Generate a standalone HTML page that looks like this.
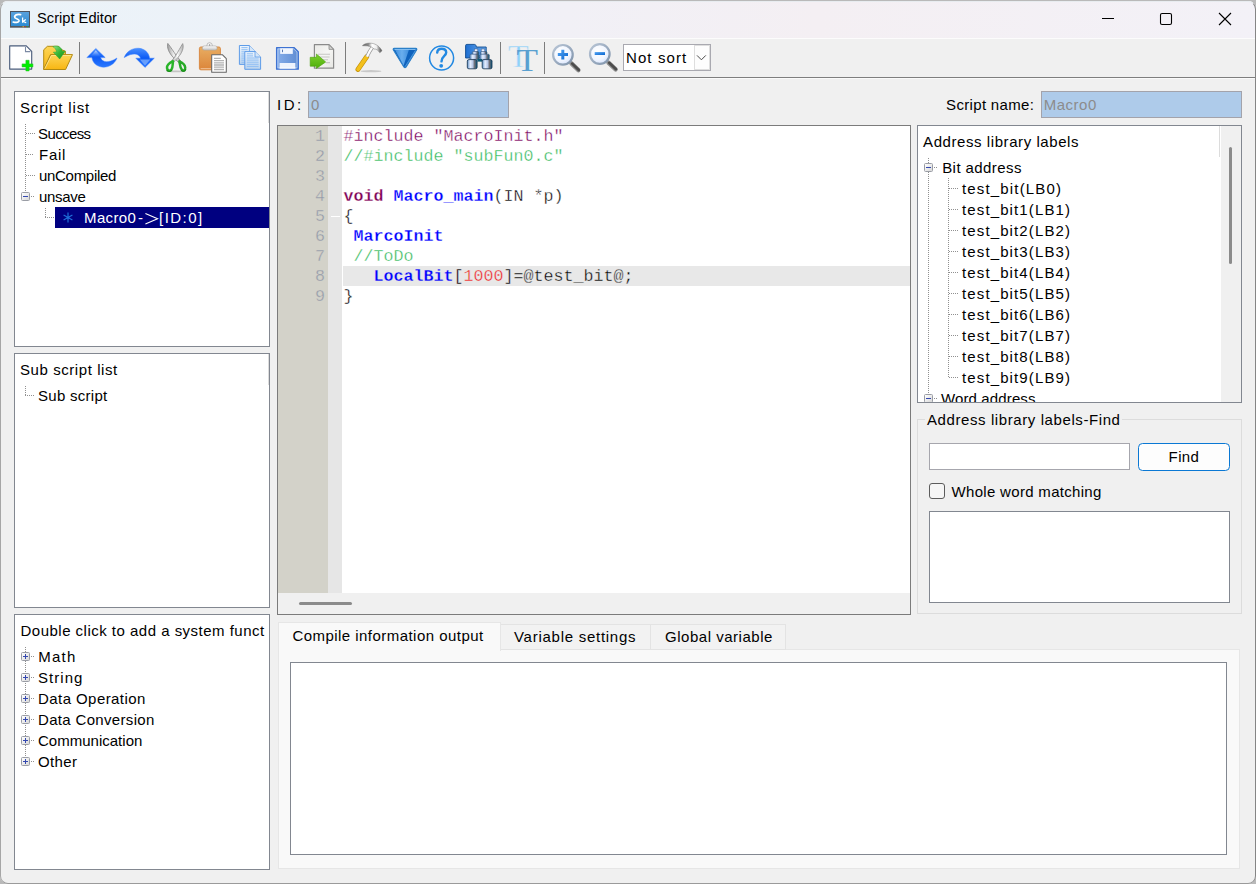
<!DOCTYPE html>
<html>
<head>
<meta charset="utf-8">
<title>Script Editor</title>
<style>
*{box-sizing:border-box;margin:0;padding:0}
html,body{width:1256px;height:884px;overflow:hidden;background:#b9b9b9;font-family:"Liberation Sans",sans-serif;}
#win{position:absolute;left:0;top:1px;width:1256px;height:883px;background:#f0f0f0;border-radius:8px;overflow:hidden;}
#winb{position:absolute;left:0;top:1px;width:1256px;height:883px;border-radius:8px;border:1px solid #a6a6a6;border-right-color:#858585;border-bottom-color:#9a9a9a;border-top-color:#e8ecf0;pointer-events:none}
.abs{position:absolute}
#title{position:absolute;left:0;top:0;width:1256px;height:38px;background:linear-gradient(90deg,#ebf3f8 0%,#edf1f9 28%,#f1f0f6 45%,#f4eff3 65%,#f3f1f7 100%);}
#title .txt{position:absolute;left:37px;top:9px;font-size:14.7px;line-height:18px;color:#000;white-space:nowrap}
#tbline{position:absolute;left:1px;top:77px;width:1254px;height:1px;background:#7e7e7e;}
#tbline2{position:absolute;left:1px;top:78px;width:1254px;height:1px;background:#fafafa;}
.panel{position:absolute;background:#fff;border:1px solid #828790;}
.t{position:absolute;font-size:15px;line-height:18px;color:#000;white-space:nowrap}
.inp{position:absolute;background:#aecbea;border:1px solid #a3a3ab;}
.code{position:absolute;left:343.5px;font-family:"Liberation Mono",monospace;font-size:16.67px;line-height:20px;height:20px;white-space:pre;color:#000}
.ln{position:absolute;left:278px;width:47px;text-align:right;font-family:"Liberation Mono",monospace;font-size:16.67px;line-height:20px;height:20px;color:#9299a8}
.code{-webkit-text-stroke:0.36px #fff}
.code.hl{-webkit-text-stroke-color:#e8e8e8}
.ln{-webkit-text-stroke:0.36px #d4d2c9}
.kw,.fn{-webkit-text-stroke-width:0.28px}
.kw{color:#7f0055;font-weight:bold}
.fn{color:#0000ff;font-weight:bold}
.pp{color:#78005a}
.cm{color:#30b858}
.num{color:#f02020}
.dh{position:absolute;height:1px;background-image:linear-gradient(90deg,#909090 50%,rgba(255,255,255,0) 50%);background-size:2px 1px}
.dv{position:absolute;width:1px;background-image:linear-gradient(180deg,#909090 50%,rgba(255,255,255,0) 50%);background-size:1px 2px}
.bx{position:absolute;width:9px;height:9px;border:1px solid #9a9da5;background:linear-gradient(135deg,#fff,#d8d8d8);border-radius:1.5px}
.bx:before{content:"";position:absolute;left:1px;top:3px;width:5px;height:1px;background:#3448b0}
.bx.plus:after{content:"";position:absolute;left:3px;top:1px;width:1px;height:5px;background:#3448b0}
.sep{position:absolute;top:42px;width:1px;height:32px;background:#7c7c7c}
#in{position:absolute;left:0;top:-1px;width:1256px;height:884px}
</style>
</head>
<body>
<div id="win"><div id="in">
<div id="title"><div class="txt">Script Editor</div></div>
<!-- app icon -->
<svg class="abs" style="left:9px;top:10px" width="22" height="18" viewBox="9 10 22 18">
<defs><linearGradient id="gSk" x1="0" y1="0" x2="0" y2="1"><stop offset="0" stop-color="#5aa2de"/><stop offset="1" stop-color="#2a8ad2"/></linearGradient></defs>
<rect x="10.5" y="11.5" width="19" height="15.5" fill="url(#gSk)" stroke="#4f5560" stroke-width="1"/>
<rect x="10" y="26" width="20" height="1.4" fill="#55595f"/>
<rect x="22.6" y="26.2" width="1.2" height="1" fill="#e8c020"/><rect x="24.6" y="26.2" width="1.2" height="1" fill="#d83030"/><rect x="26.6" y="26.2" width="1.2" height="1" fill="#30b030"/>
<path d="M20.6 14.6C17.5 14.2 15 15 14.6 16.8C14.2 19 19.4 18.6 19 21C18.6 22.6 15.6 22.8 13.2 22" fill="none" stroke="#fff" stroke-width="1.7" stroke-linecap="round"/>
<path d="M22.6 17.4V22.8M25.8 19.4L23 21.4L26.2 22.8" fill="none" stroke="#fff" stroke-width="1.2"/>
</svg>
<!-- caption buttons -->
<svg class="abs" style="left:1090px;top:8px" width="150" height="24" viewBox="1090 8 150 24">
<path d="M1102 18.5H1114" stroke="#000" stroke-width="1"/>
<rect x="1160.5" y="13.5" width="11" height="11" rx="1.6" fill="none" stroke="#000" stroke-width="1.1"/>
<path d="M1219 13L1231 25M1231 13L1219 25" stroke="#000" stroke-width="1.1"/>
</svg>
<div class="abs" style="left:1px;top:38px;width:1254px;height:1px;background:#fcfcfc"></div>
<div id="tbline"></div><div id="tbline2"></div>
<div class="sep" style="left:79px"></div><div class="sep" style="left:345px"></div><div class="sep" style="left:500px"></div><div class="sep" style="left:544px"></div>
<svg class="abs" style="left:0;top:39px" width="730" height="38" viewBox="0 39 730 38">
<defs>
<linearGradient id="gFold" x1="0" y1="0" x2="0" y2="1"><stop offset="0" stop-color="#fdd556"/><stop offset="1" stop-color="#f8b612"/></linearGradient>
<linearGradient id="gGreen" x1="0" y1="0" x2="1" y2="1"><stop offset="0" stop-color="#8fe58f"/><stop offset="0.5" stop-color="#35b535"/><stop offset="1" stop-color="#1a8f1a"/></linearGradient>
<linearGradient id="gBlue" x1="0" y1="0" x2="0" y2="1"><stop offset="0" stop-color="#4a90ff"/><stop offset="0.5" stop-color="#0e5cf5"/><stop offset="1" stop-color="#2a78ff"/></linearGradient>
<linearGradient id="gClip" x1="0" y1="0" x2="0" y2="1"><stop offset="0" stop-color="#e8ad62"/><stop offset="1" stop-color="#dc853a"/></linearGradient>
<linearGradient id="gSilver" x1="0" y1="0" x2="0" y2="1"><stop offset="0" stop-color="#ffffff"/><stop offset="1" stop-color="#c4c4c4"/></linearGradient>
<linearGradient id="gCopy" x1="0" y1="0" x2="0" y2="1"><stop offset="0" stop-color="#eef5fd"/><stop offset="1" stop-color="#b9d3ee"/></linearGradient>
<linearGradient id="gFloppy" x1="0" y1="0" x2="1" y2="0"><stop offset="0" stop-color="#86aeea"/><stop offset="1" stop-color="#5f8cd2"/></linearGradient>
<linearGradient id="gPage" x1="0" y1="0" x2="1" y2="1"><stop offset="0" stop-color="#e9e9e6"/><stop offset="0.5" stop-color="#f6f6f4"/><stop offset="1" stop-color="#e6e6e3"/></linearGradient>
<linearGradient id="gArrow" x1="0" y1="0" x2="0" y2="1"><stop offset="0" stop-color="#7bd02c"/><stop offset="1" stop-color="#4fae0c"/></linearGradient>
<linearGradient id="gTriL" x1="0" y1="0" x2="1" y2="0"><stop offset="0" stop-color="#3f8fde"/><stop offset="0.5" stop-color="#69aeee"/><stop offset="1" stop-color="#3f8fde"/></linearGradient>
<linearGradient id="gMetal" x1="0" y1="0" x2="1" y2="0"><stop offset="0" stop-color="#5d8fc4"/><stop offset="0.3" stop-color="#e6eeff"/><stop offset="0.55" stop-color="#b8c8e8"/><stop offset="0.75" stop-color="#6a6a72"/><stop offset="1" stop-color="#0d5a80"/></linearGradient>
<linearGradient id="gBFold" x1="0" y1="0" x2="1" y2="0"><stop offset="0" stop-color="#1e6fd2"/><stop offset="1" stop-color="#69a8ea"/></linearGradient>
<radialGradient id="gLens" cx="0.4" cy="0.35" r="0.75"><stop offset="0" stop-color="#ffffff"/><stop offset="0.6" stop-color="#f0f5ff"/><stop offset="1" stop-color="#cddcfa"/></radialGradient>
<linearGradient id="gRing" x1="0" y1="0" x2="1" y2="1"><stop offset="0" stop-color="#b9c6d6"/><stop offset="1" stop-color="#7f93ab"/></linearGradient>
<linearGradient id="gPlus" x1="0" y1="0" x2="1" y2="1"><stop offset="0" stop-color="#52a4f4"/><stop offset="1" stop-color="#0a66d0"/></linearGradient>
<linearGradient id="gBlade" x1="0" y1="0" x2="1" y2="0"><stop offset="0" stop-color="#9c9c9c"/><stop offset="0.5" stop-color="#f2f2f2"/><stop offset="1" stop-color="#a6a6a6"/></linearGradient>
<linearGradient id="gBlade2" x1="0" y1="0" x2="1" y2="0"><stop offset="0" stop-color="#b4b4b4"/><stop offset="0.5" stop-color="#fafafa"/><stop offset="1" stop-color="#b0b0b0"/></linearGradient>
<linearGradient id="gHead" gradientUnits="userSpaceOnUse" x1="362" y1="0" x2="382" y2="0"><stop offset="0" stop-color="#565656"/><stop offset="0.32" stop-color="#8c8c8c"/><stop offset="0.5" stop-color="#ffffff"/><stop offset="0.72" stop-color="#efefef"/><stop offset="0.86" stop-color="#8e8e8e"/><stop offset="1" stop-color="#484848"/></linearGradient>
<linearGradient id="gHi" x1="0" y1="0" x2="0" y2="1"><stop offset="0" stop-color="#d8e8ff" stop-opacity="0.9"/><stop offset="1" stop-color="#78aaff" stop-opacity="0"/></linearGradient>
</defs>

<!-- new file -->
<path d="M9.7 45.9H26.3L31.7 51.3V69.1H9.7Z" fill="#fff" stroke="#4b5d7c" stroke-width="1.15" stroke-linejoin="round"/>
<path d="M25.5 47V51.6H30.4" fill="none" stroke="#7c8aa4" stroke-width="1.1"/>
<path d="M25.9 60.3H29.1V63.9H32.9V66.9H29.1V70.9H25.9V66.9H22.1V63.9H25.9Z" fill="#00ee00" stroke="#22c822" stroke-width="0.6"/>

<!-- open folder -->
<path d="M43.7 69.3V49.8L47.4 46.3H58.5L61 49.5 65.4 51.2V54.5H50.6Z" fill="url(#gFold)" stroke="#b38a12" stroke-width="1"/>
<path d="M43.7 69.5L50.8 54.6H72.5L65.6 69.5Z" fill="url(#gFold)" stroke="#b38a12" stroke-width="1" stroke-linejoin="round"/>
<path d="M44.8 68.6L51.4 55.5H71.2" fill="none" stroke="#fde592" stroke-width="0.9"/>
<path d="M52.8 46.6C57.5 45 61.8 47.2 62.3 51.3L65.2 51.2 59.7 59 53.3 52.2 56.6 51.9C56.2 49.6 55 47.8 52.8 46.6Z" fill="url(#gGreen)" stroke="#2aa02a" stroke-width="0.5"/>

<!-- undo -->
<path d="M95.8 48.4L105.2 57.6H100.6C102 62.5 108.5 63.6 117 58C114.5 65 106.5 68.6 99.8 66.6C94.8 65 92.3 61.2 92 57.6H86.9Z" fill="url(#gBlue)" stroke="#3a80ff" stroke-width="0.5" stroke-linejoin="round"/>
<path d="M95.8 50.2L90.6 56.4H101Z" fill="url(#gHi)"/>
<!-- redo -->
<path d="M145 67.4L135.8 58.2H140.5C139.3 53.6 133 52 124.2 57.6C126.5 50.6 134.3 47 141 48.6C146 50 149.2 53.8 149.6 58.2H154.3Z" fill="url(#gBlue)" stroke="#3a80ff" stroke-width="0.5" stroke-linejoin="round"/>
<path d="M145 65.6L150.4 59.4H139.8Z" fill="#a8ccff" opacity="0.55"/>

<!-- scissors -->
<ellipse cx="176" cy="71.4" rx="10" ry="0.9" fill="#c4c4c4"/>
<path d="M167.8 43.4C166.6 47.6 169 53 173.4 57.6L178.6 62.4L180.6 60.8L176.6 56C173.4 51.4 170.4 46.6 167.8 43.4Z" fill="url(#gBlade)" stroke="#868686" stroke-width="0.8" stroke-linejoin="round"/>
<path d="M182.7 43.6C184.2 47.8 182 53 178 57.4L173.6 62.2L171.8 60.8L175.4 56C178.2 51.6 180.6 47 182.7 43.6Z" fill="url(#gBlade2)" stroke="#8e8e8e" stroke-width="0.8" stroke-linejoin="round"/>
<path d="M173 61.2C172.6 64 173 67.4 171.4 69.6C170 71.4 167.4 70.8 167 68C166.8 65 169.2 63 173 61.2Z" fill="#f4eef4" stroke="#2ab52a" stroke-width="2.5" stroke-linejoin="round"/>
<path d="M179.4 61.4C180 64 179.8 67.4 181.8 69.6C183.4 71.4 185.4 70.4 185.2 67.6C185 64.8 183 63 179.4 61.4Z" fill="#f4eef4" stroke="#27aa27" stroke-width="2.5" stroke-linejoin="round"/>
<path d="M166.6 69.8C167.8 72 170.8 72 172 69.8" fill="none" stroke="#178a17" stroke-width="1.1"/>
<path d="M181.2 70C182.4 72 185.2 71.6 185.8 69.2" fill="none" stroke="#178a17" stroke-width="1.1"/>

<!-- paste -->
<rect x="199.4" y="47" width="21" height="22.8" rx="1.5" fill="url(#gClip)" stroke="#d98a44" stroke-width="1"/>
<path d="M200.6 68.6H211" stroke="#f2c49a" stroke-width="0.9"/>
<circle cx="209.6" cy="45.4" r="2.7" fill="#f6f6f6" stroke="#a6a6a6" stroke-width="0.7"/>
<rect x="202.4" y="45.9" width="14.6" height="4.2" rx="1.8" fill="url(#gSilver)" stroke="#a9a9a9" stroke-width="0.6"/>
<circle cx="209.6" cy="45" r="0.7" fill="#8a8a8a"/>
<path d="M211.7 54.7H222.3L226.3 58.7V72.2H211.7Z" fill="#fff" stroke="#666" stroke-width="1.05" stroke-linejoin="round"/>
<path d="M214 58.3H220.8M214 60.6H224M214 62.8H224M214 65H224M214 67.2H224M214 69.5H224" stroke="#b3b3b3" stroke-width="1.3"/>

<!-- copy -->
<path d="M239.4 45.5H249.4L255.6 51.6V64.4H239.4Z" fill="url(#gCopy)" stroke="#5e9ce8" stroke-width="1"/>
<path d="M249.4 45.5V51.6H255.6" fill="#d5e6f8" stroke="#5e9ce8" stroke-width="0.8"/>
<path d="M241.4 47.6H247.6M241.4 49.7H247.6M241.4 51.8H245M241.4 53.9H245M241.4 56H245M241.4 58.1H245M241.4 60.2H245M241.4 62.3H245" stroke="#90bff4" stroke-width="1"/>
<path d="M244.8 51.6H255L260.6 57V69.3H244.8Z" fill="url(#gCopy)" stroke="#5e9ce8" stroke-width="1"/>
<path d="M255 51.6V57H260.6" fill="#d5e6f8" stroke="#5e9ce8" stroke-width="0.8"/>
<path d="M246.8 53.8H253M246.8 55.9H253M246.8 58H258.6M246.8 60.1H258.6M246.8 62.2H258.6M246.8 64.3H258.6M246.8 66.4H258.6" stroke="#90bff4" stroke-width="1"/>

<!-- save -->
<path d="M276.6 47.6H294.2L298.3 51.6V69.2H276.6Z" fill="url(#gFloppy)" stroke="#3f73d2" stroke-width="1.3" stroke-linejoin="round"/>
<path d="M277.9 48.9H293.7L297 52.1V67.9H277.9Z" fill="none" stroke="#c4daf8" stroke-width="0.7"/>
<rect x="280.2" y="48.3" width="12.6" height="5.6" fill="#f1f6fe"/>
<rect x="282" y="49.6" width="0.9" height="2.6" fill="#4a6fae"/>
<rect x="279.6" y="63" width="15.8" height="5.4" fill="#eef3fd"/>
<rect x="279.6" y="67.6" width="15.8" height="0.9" fill="#fff"/>

<!-- export -->
<path d="M314.4 44.7H329L333.6 49.4V68.2H314.4Z" fill="url(#gPage)" stroke="#8a8a8a" stroke-width="1.2" stroke-linejoin="round"/>
<path d="M329 44.7V49.4H333.6Z" fill="#d0d0ce" stroke="#8a8a8a" stroke-width="0.8"/>
<path d="M318 54.3H330M318 57H329.6M322 59.8H328M326 62.6H330" stroke="#c6c6c4" stroke-width="1.1"/>
<path d="M310.2 57.3H316.4V54L325.7 62 316.4 68.4V66.2H310.2Z" fill="url(#gArrow)" stroke="#4aa00e" stroke-width="0.6" stroke-linejoin="round"/>

<!-- hammer -->
<ellipse cx="371" cy="71.2" rx="10.5" ry="1.1" fill="#c9c9c9"/>
<path d="M358 69.4L366.6 56.8" stroke="#c4920a" stroke-width="5" stroke-linecap="round"/>
<path d="M358.1 69.2L366.5 57" stroke="#f3c01c" stroke-width="3.7" stroke-linecap="round"/>
<path d="M367 56.6C368.6 53 370.6 49.6 372.8 46.6" fill="none" stroke="#9a9a9a" stroke-width="3.6"/>
<path d="M367 56.6C368.6 53 370.6 49.6 372.8 46.4" fill="none" stroke="#fdfdfd" stroke-width="2.2"/>
<path d="M362.4 45.7C364.4 43.5 368.4 42.7 371.8 43.3C376 43.8 380 46.8 382 50.8L379.8 52.8C378.2 50.2 376.2 48.8 374 49C372.6 47.4 370.2 46.2 367.4 45.9C365.6 45.7 363.8 45.9 362.4 45.7Z" fill="url(#gHead)" stroke="#7a7a7a" stroke-width="0.5" stroke-linejoin="round"/>

<!-- triangle -->
<path d="M394.2 48.4H415.8Q417.4 48.6 416.6 50L406 67.2Q405 68.4 404 67.2L393.4 50Q392.6 48.6 394.2 48.4Z" fill="#0f62bc" stroke="#2a7fc8" stroke-width="1.1"/>
<path d="M394.8 49.6H409L403.6 65.6Z" fill="url(#gTriL)"/>
<path d="M394.4 49.5H415.6" stroke="#8cc4f4" stroke-width="0.9"/>
<path d="M415.4 50.4L405 66.8" stroke="#58a2e6" stroke-width="0.8"/>

<!-- help -->
<circle cx="441.6" cy="58" r="12" fill="none" stroke="#2389e2" stroke-width="1.5"/>
<path d="M437.2 52.6C437.4 50 439.2 48.8 441.6 48.8C444.4 48.8 446.2 50.4 446.2 52.6C446.2 56 441.6 56 441.5 61.4" fill="none" stroke="#2389e2" stroke-width="2.4" stroke-linecap="round"/>
<circle cx="441.2" cy="65.8" r="1.9" fill="#2389e2"/>

<!-- binoculars -->
<path d="M465.6 45.6Q465.6 44.4 466.8 44.4H474.4Q475.6 44.4 476 45.6L476.4 47H486.2V58H465.6Z" fill="url(#gBFold)" stroke="#0d4a8e" stroke-width="0.9"/>
<rect x="474.4" y="49" width="3.4" height="2.8" fill="#e8f0ff" stroke="#3a5a86" stroke-width="0.5"/>
<rect x="481.2" y="49" width="3.6" height="2.8" fill="#e8f0ff" stroke="#3a5a86" stroke-width="0.5"/>
<rect x="472.2" y="51.6" width="6.6" height="2.8" rx="1" fill="url(#gMetal)" stroke="#2a4a70" stroke-width="0.5"/>
<rect x="480.4" y="51.6" width="6.6" height="2.8" rx="1" fill="url(#gMetal)" stroke="#2a4a70" stroke-width="0.5"/>
<rect x="469.9" y="54.2" width="9.3" height="5.2" rx="1" fill="url(#gMetal)" stroke="#2a4a70" stroke-width="0.5"/>
<rect x="480" y="54.2" width="9.3" height="5.2" rx="1" fill="url(#gMetal)" stroke="#2a4a70" stroke-width="0.5"/>
<rect x="477.4" y="59" width="4.6" height="2.6" fill="#0d5a78"/>
<rect x="467.3" y="59.6" width="9.8" height="9.2" rx="1.6" fill="url(#gMetal)" stroke="#12304e" stroke-width="0.8"/>
<rect x="482.2" y="59.6" width="9.8" height="9.2" rx="1.6" fill="url(#gMetal)" stroke="#12304e" stroke-width="0.8"/>

<!-- TT -->
<text x="0" y="0" transform="translate(507.9 66.6) scale(1.05 1)" font-family="Liberation Serif, serif" font-size="32.6" fill="#8fd1fa" stroke="#f0f0f0" stroke-width="0.5">T</text>
<text x="0" y="0" transform="translate(516.6 71) scale(1.08 1)" font-family="Liberation Serif, serif" font-size="32.6" fill="#5aa0d0">T</text>

<!-- zoom in -->
<path d="M571.4 63.4L578.4 70.2" stroke="#8e8e8e" stroke-width="4.4" stroke-linecap="round"/>
<path d="M572.2 63.6L578.8 70" stroke="#4c4c4c" stroke-width="2.6" stroke-linecap="round"/>
<circle cx="562.9" cy="54.8" r="9.8" fill="url(#gLens)" stroke="url(#gRing)" stroke-width="2.2"/>
<path d="M561.3 49.8H564.3V53.1H568V56.1H564.3V59.6H561.3V56.1H557.8V53.1H561.3Z" fill="url(#gPlus)"/>
<!-- zoom out -->
<path d="M608.4 62.6L615.6 69.4" stroke="#8e8e8e" stroke-width="4.4" stroke-linecap="round"/>
<path d="M609.2 62.8L616 69.2" stroke="#4c4c4c" stroke-width="2.6" stroke-linecap="round"/>
<circle cx="599.8" cy="54" r="9.8" fill="url(#gLens)" stroke="url(#gRing)" stroke-width="2.2"/>
<rect x="594.7" y="52.1" width="10.3" height="2.9" fill="url(#gPlus)"/>
</svg>

<!-- combo -->
<div class="abs" style="left:623px;top:44px;width:88px;height:27px;background:#fff;border:1px solid #a9a9b0"></div>
<div class="abs" style="left:694px;top:45px;width:16px;height:25px;background:#fdfdfd;border:1px solid #dedede"></div>
<svg class="abs" style="left:695px;top:53px" width="13" height="9" viewBox="695 53 13 9"><path d="M697 55.4L701.4 59.8L705.8 55.4" fill="none" stroke="#4a4a4a" stroke-width="1"/></svg>

<!-- left panels -->
<div class="panel" style="left:14px;top:91px;width:256px;height:256px"></div>
<div class="panel" style="left:14px;top:353px;width:256px;height:255px"></div>
<div class="panel" style="left:14px;top:614px;width:256px;height:256px"></div>
<div class="abs" style="left:268px;top:92px;width:1px;height:31px;background:#dcdcdc"></div>
<div class="abs" style="left:268px;top:354px;width:1px;height:31px;background:#dcdcdc"></div>

<!-- p1 tree -->
<div class="dv" style="left:25px;top:124px;height:68px"></div>
<div class="dh" style="left:26px;top:133px;width:10px"></div>
<div class="dh" style="left:26px;top:154px;width:8px"></div>
<div class="dh" style="left:26px;top:175px;width:10px"></div>
<div class="bx" style="left:21px;top:192px"></div>
<div class="dh" style="left:31px;top:196px;width:4px"></div>
<div class="dv" style="left:45px;top:208px;height:10px"></div>
<div class="dh" style="left:45px;top:217px;width:10px"></div>
<div class="abs" style="left:55px;top:207px;width:214px;height:21px;background:#000080"></div>
<svg class="abs" style="left:62px;top:211px" width="12" height="13" viewBox="62 211 12 13"><path d="M68 212.4V222.6M63.6 215L72.4 220M72.4 215L63.6 220" stroke="#1f6fd8" stroke-width="1.2" fill="none"/></svg>

<svg class="abs" style="left:144px;top:211px" width="16" height="16" viewBox="144 211 16 16"><path d="M145.4 213.4L157.6 218.7L145.4 224" fill="none" stroke="#fff" stroke-width="1.1"/></svg>
<!-- p2 tree -->
<div class="dv" style="left:25px;top:386px;height:10px"></div>
<div class="dh" style="left:25px;top:395px;width:10px"></div>

<!-- p3 tree -->
<div class="dv" style="left:25px;top:647px;height:112px"></div>
<div class="bx plus" style="left:21px;top:652px"></div><div class="dh" style="left:31px;top:656px;width:4px"></div>
<div class="bx plus" style="left:21px;top:673px"></div><div class="dh" style="left:31px;top:677px;width:4px"></div>
<div class="bx plus" style="left:21px;top:694px"></div><div class="dh" style="left:31px;top:698px;width:4px"></div>
<div class="bx plus" style="left:21px;top:715px"></div><div class="dh" style="left:31px;top:719px;width:4px"></div>
<div class="bx plus" style="left:21px;top:736px"></div><div class="dh" style="left:31px;top:740px;width:4px"></div>
<div class="bx plus" style="left:21px;top:757px"></div><div class="dh" style="left:31px;top:761px;width:4px"></div>

<!-- ID / name -->
<div class="inp" style="left:308px;top:91px;width:201px;height:27px"></div>
<div class="inp" style="left:1041px;top:91px;width:201px;height:27px"></div>

<!-- editor -->
<div class="panel" style="left:277px;top:125px;width:634px;height:490px;border-color:#7b7b7b"></div>
<div class="abs" style="left:278px;top:126px;width:50px;height:467px;background:#d3d2c9"></div>
<div class="abs" style="left:328px;top:126px;width:14px;height:467px;background:#e6e6e6"></div>
<div class="abs" style="left:343px;top:266px;width:567px;height:20px;background:#e8e8e8"></div>
<div class="abs" style="left:278px;top:593px;width:632px;height:21px;background:#f0f0f0"></div>
<div class="abs" style="left:299px;top:602px;width:53px;height:3px;background:#8b8b8b;border-radius:1.5px"></div>
<div class="abs" style="left:331px;top:216px;width:9px;height:1px;background:#fff"></div>
<div class="ln" style="top:127px">1</div><div class="ln" style="top:147px">2</div><div class="ln" style="top:167px">3</div>
<div class="ln" style="top:187px">4</div><div class="ln" style="top:207px">5</div><div class="ln" style="top:227px">6</div>
<div class="ln" style="top:247px">7</div><div class="ln" style="top:267px">8</div><div class="ln" style="top:287px">9</div>
<div class="code pp" style="top:127px">#include "MacroInit.h"</div>
<div class="code cm" style="top:147px">//#include "subFun0.c"</div>
<div class="code" style="top:187px"><span class="kw">void</span> <span class="fn">Macro_main</span>(IN *p)</div>
<div class="code" style="top:207px">{</div>
<div class="code" style="top:227px"> <span class="fn">MarcoInit</span></div>
<div class="code cm" style="top:247px"> //ToDo</div>
<div class="code hl" style="top:267px">   <span class="fn">LocalBit</span>[<span class="num">1000</span>]=@test_bit@;</div>
<div class="code" style="top:287px">}</div>

<!-- p4 -->
<div class="panel" style="left:917px;top:125px;width:325px;height:278px"></div>
<div class="abs" style="left:1221px;top:126px;width:20px;height:276px;background:#f0f0f0"></div>
<div class="abs" style="left:1219px;top:126px;width:1px;height:31px;background:#dcdcdc"></div>
<div class="abs" style="left:1229px;top:147px;width:3px;height:117px;background:#8b8b8b;border-radius:1.5px"></div>
<div class="dv" style="left:928px;top:158px;height:244px"></div>
<div class="bx" style="left:924px;top:163px"></div><div class="dh" style="left:934px;top:167px;width:4px"></div>
<div class="dv" style="left:948px;top:178px;height:200px"></div>
<div class="dh" style="left:949px;top:188px;width:9px"></div><div class="dh" style="left:949px;top:209px;width:9px"></div>
<div class="dh" style="left:949px;top:230px;width:9px"></div><div class="dh" style="left:949px;top:251px;width:9px"></div>
<div class="dh" style="left:949px;top:272px;width:9px"></div><div class="dh" style="left:949px;top:293px;width:9px"></div>
<div class="dh" style="left:949px;top:314px;width:9px"></div><div class="dh" style="left:949px;top:335px;width:9px"></div>
<div class="dh" style="left:949px;top:356px;width:9px"></div><div class="dh" style="left:949px;top:377px;width:9px"></div>
<div class="bx" style="left:924px;top:394px"></div><div class="dh" style="left:934px;top:398px;width:4px"></div>

<!-- word address (clipped) -->
<div class="t" style="left:941.00px;top:389.80px;letter-spacing:0.127px">Word address</div>
<div class="abs" style="left:917px;top:402px;width:325px;height:13px;background:#f0f0f0;border-top:1px solid #828790"></div>
<!-- group box -->
<div class="abs" style="left:917px;top:419px;width:325px;height:195px;border:1px solid #dcdcdc"></div>
<div class="abs" style="left:925px;top:415px;width:197px;height:10px;background:#f0f0f0"></div>
<div class="abs" style="left:929px;top:443px;width:201px;height:27px;background:#fff;border:1px solid #a6a6ad"></div>
<div class="abs" style="left:1138px;top:443px;width:92px;height:28px;background:#fdfdfd;border:1px solid #0a78d4;border-radius:4.5px"></div>
<div class="abs" style="left:929px;top:483px;width:16px;height:16px;background:#f6f6f6;border:1px solid #5c5c5c;border-radius:3px"></div>
<div class="panel" style="left:929px;top:511px;width:301px;height:92px"></div>

<!-- tabs -->
<div class="abs" style="left:278px;top:649px;width:962px;height:220px;background:#f9f9f9;border:1px solid #e6e6e6"></div>
<div class="abs" style="left:500px;top:624px;width:151px;height:26px;background:#f2f2f2;border:1px solid #e3e3e3"></div>
<div class="abs" style="left:650px;top:624px;width:136px;height:26px;background:#f2f2f2;border:1px solid #e3e3e3"></div>
<div class="abs" style="left:278px;top:622px;width:223px;height:29px;background:#f9f9f9;border:1px solid #e6e6e6;border-bottom:none"></div>
<div class="panel" style="left:290px;top:662px;width:937px;height:193px"></div>

<div class="t" style="left:20.00px;top:98.80px;letter-spacing:0.833px">Script list</div>
<div class="t" style="left:38.00px;top:125.10px;letter-spacing:-0.598px">Success</div>
<div class="t" style="left:39.00px;top:146.10px;letter-spacing:0.721px">Fail</div>
<div class="t" style="left:39.00px;top:167.10px;letter-spacing:-0.300px">unCompiled</div>
<div class="t" style="left:39.00px;top:188.10px;letter-spacing:-0.325px">unsave</div>
<div class="t" style="left:84.00px;top:209.10px;letter-spacing:0.385px;color:#fff">Macro0</div>
<div class="t" style="left:138.00px;top:209.10px;letter-spacing:0.000px;color:#fff">-</div>
<div class="t" style="left:159.00px;top:209.10px;letter-spacing:1.465px;color:#fff">[ID:0]</div>
<div class="t" style="left:20.00px;top:360.90px;letter-spacing:0.570px">Sub script list</div>
<div class="t" style="left:38.00px;top:386.80px;letter-spacing:0.275px">Sub script</div>
<div class="t" style="left:20.50px;top:622.00px;letter-spacing:0.487px">Double click to add a system funct</div>
<div class="t" style="left:38.20px;top:647.80px;letter-spacing:1.265px">Math</div>
<div class="t" style="left:38.00px;top:668.80px;letter-spacing:1.032px">String</div>
<div class="t" style="left:38.00px;top:689.80px;letter-spacing:0.432px">Data Operation</div>
<div class="t" style="left:38.00px;top:710.80px;letter-spacing:0.330px">Data Conversion</div>
<div class="t" style="left:38.00px;top:731.80px;letter-spacing:0.011px">Communication</div>
<div class="t" style="left:38.00px;top:752.80px;letter-spacing:0.370px">Other</div>
<div class="t" style="left:277.00px;top:96.20px;letter-spacing:2.500px">ID:</div>
<div class="t" style="left:311.00px;top:96.20px;letter-spacing:0.000px;color:#8c8c8c">0</div>
<div class="t" style="left:946.10px;top:95.80px;letter-spacing:0.324px">Script name:</div>
<div class="t" style="left:1043.70px;top:96.10px;letter-spacing:0.525px;color:#8c8c8c">Macro0</div>
<div class="t" style="left:923.10px;top:133.00px;letter-spacing:0.572px">Address library labels</div>
<div class="t" style="left:942.20px;top:158.80px;letter-spacing:0.426px">Bit address</div>
<div class="t" style="left:927.00px;top:410.90px;letter-spacing:0.591px">Address library labels-Find</div>
<div class="t" style="left:1168.60px;top:447.70px;letter-spacing:0.388px">Find</div>
<div class="t" style="left:951.60px;top:482.80px;letter-spacing:0.306px">Whole word matching</div>
<div class="t" style="left:292.40px;top:627.00px;letter-spacing:0.460px">Compile information output</div>
<div class="t" style="left:514.00px;top:627.80px;letter-spacing:0.732px">Variable settings</div>
<div class="t" style="left:665.00px;top:627.80px;letter-spacing:0.520px">Global variable</div>
<div class="t" style="left:626.00px;top:48.80px;letter-spacing:1.093px">Not sort</div>
<div class="t" style="left:962.00px;top:179.80px;letter-spacing:1.163px">test_bit(LB0)</div>
<div class="t" style="left:962.00px;top:200.80px;letter-spacing:1.124px">test_bit1(LB1)</div>
<div class="t" style="left:962.00px;top:221.80px;letter-spacing:1.124px">test_bit2(LB2)</div>
<div class="t" style="left:962.00px;top:242.80px;letter-spacing:1.124px">test_bit3(LB3)</div>
<div class="t" style="left:962.00px;top:263.80px;letter-spacing:1.124px">test_bit4(LB4)</div>
<div class="t" style="left:962.00px;top:284.80px;letter-spacing:1.124px">test_bit5(LB5)</div>
<div class="t" style="left:962.00px;top:305.80px;letter-spacing:1.124px">test_bit6(LB6)</div>
<div class="t" style="left:962.00px;top:326.80px;letter-spacing:1.124px">test_bit7(LB7)</div>
<div class="t" style="left:962.00px;top:347.80px;letter-spacing:1.124px">test_bit8(LB8)</div>
<div class="t" style="left:962.00px;top:368.80px;letter-spacing:1.124px">test_bit9(LB9)</div>
<div class="abs" style="left:266px;top:620px;width:3px;height:20px;background:#fff"></div>

</div></div>
<div id="winb"></div>
</body>
</html>
